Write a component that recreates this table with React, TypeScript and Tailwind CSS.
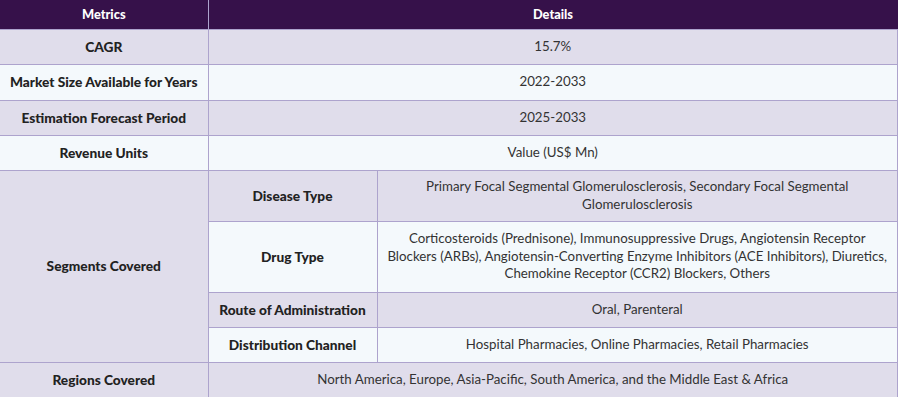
const segments = [
  {
    label: 'Disease Type',
    value: 'Primary Focal Segmental Glomerulosclerosis, Secondary Focal Segmental Glomerulosclerosis',
    h: 'h-[51px]',
  },
  {
    label: 'Drug Type',
    value:
      'Corticosteroids (Prednisone), Immunosuppressive Drugs, Angiotensin Receptor Blockers (ARBs), Angiotensin-Converting Enzyme Inhibitors (ACE Inhibitors), Diuretics, Chemokine Receptor (CCR2) Blockers, Others',
    h: 'h-[71px]',
  },
  { label: 'Route of Administration', value: 'Oral, Parenteral', h: 'h-[35px]' },
  { label: 'Distribution Channel', value: 'Hospital Pharmacies, Online Pharmacies, Retail Pharmacies', h: 'h-[35px]' },
];

const rowBg = (i: number) => (i % 2 === 0 ? 'bg-[#e0ddeb]' : 'bg-[#f4f9fc]');

const cell = 'border border-[#ada3cd] px-2 text-center align-middle';
const label = `${cell} font-black text-[13.7px] text-[#222222]`;
const value = `${cell} text-[#333333]`;

export default function App() {
  return (
    <div className="w-[898px] bg-white font-['Lato',sans-serif] text-[13.3px] leading-[17.5px]">
      <table className="w-full table-fixed border-collapse border-l-0">
        <colgroup>
          <col className="w-[208px]" />
          <col className="w-[169px]" />
          <col />
        </colgroup>
        <thead>
          <tr className="h-[29px] bg-[#36114a] text-[12.8px] text-white">
            <th className="border-r border-[#ada3cd] font-black">Metrics</th>
            <th colSpan={2} className="font-black">Details</th>
          </tr>
        </thead>
        <tbody>
          <tr className={`h-[35px] ${rowBg(0)}`}>
            <td className={`${label} border-l-0`}>CAGR</td>
            <td colSpan={2} className={value}>15.7%</td>
          </tr>
          <tr className={`h-[36px] ${rowBg(1)}`}>
            <td className={`${label} border-l-0`}>Market Size Available for Years</td>
            <td colSpan={2} className={value}>2022-2033</td>
          </tr>
          <tr className={`h-[35px] ${rowBg(0)}`}>
            <td className={`${label} border-l-0`}>Estimation Forecast Period</td>
            <td colSpan={2} className={value}>2025-2033</td>
          </tr>
          <tr className={`h-[35px] ${rowBg(1)}`}>
            <td className={`${label} border-l-0`}>Revenue Units</td>
            <td colSpan={2} className={value}>Value (US$ Mn)</td>
          </tr>
          {segments.map((s, i) => (
            <tr key={s.label} className={`${s.h} ${rowBg(i)}`}>
              {i === 0 && (
                <td rowSpan={segments.length} className={`${label} border-l-0 bg-[#e0ddeb]`}>
                  Segments Covered
                </td>
              )}
              <td className={label}>{s.label}</td>
              <td className={value}>{s.value}</td>
            </tr>
          ))}
          <tr className={`h-[35px] ${rowBg(0)}`}>
            <td className={`${label} border-l-0`}>Regions Covered</td>
            <td colSpan={2} className={value}>
              North America, Europe, Asia-Pacific, South America, and the Middle East &amp; Africa
            </td>
          </tr>
        </tbody>
      </table>
    </div>
  );
}
